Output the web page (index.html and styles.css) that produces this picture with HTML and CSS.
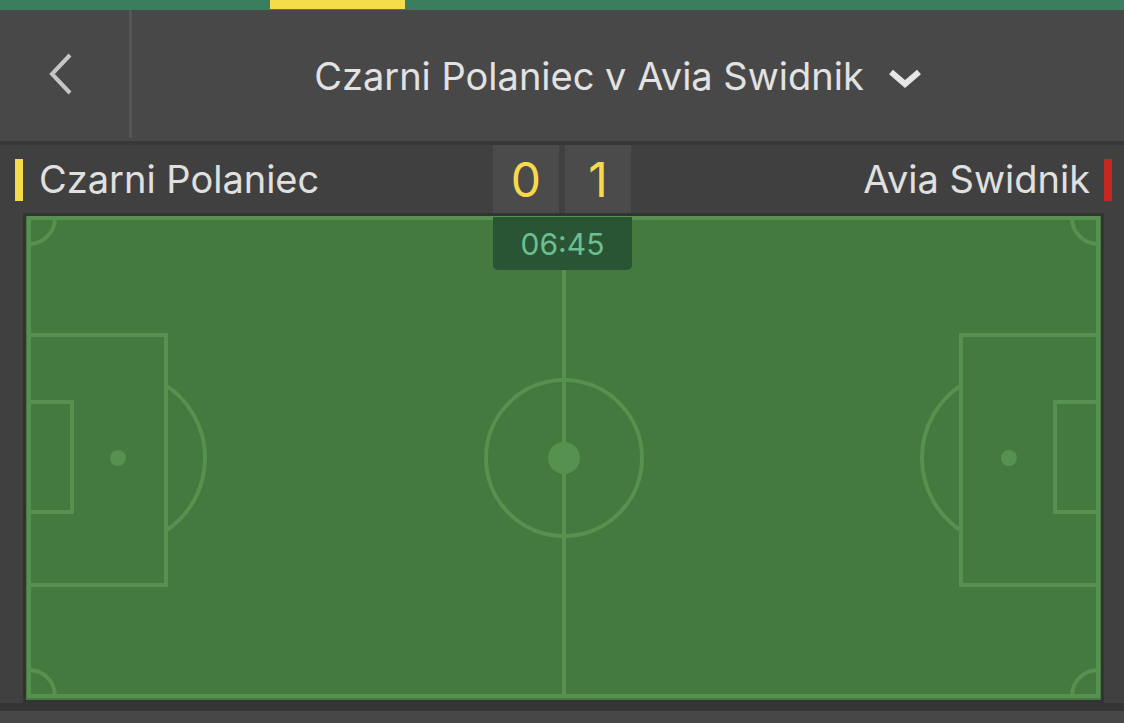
FILE: index.html
```html
<!DOCTYPE html>
<html lang="en">
<head>
    <meta charset="UTF-8">
    <meta name="viewport" content="width=device-width, initial-scale=1.0">
    <title>Czarni Polaniec v Avia Swidnik</title>
    <link rel="stylesheet" href="styles.css">
</head>
<body>
    <div class="topBar">
        <div class="tabMarker"></div>
    </div>

    <header class="header">
        <div class="back">
            <svg width="26" height="42" viewBox="0 0 26 42">
                <path d="M22 2 L4 21 L22 40" fill="none" stroke="#c6c6c6" stroke-width="4"/>
            </svg>
        </div>
        <div class="title">
            <span>Czarni Polaniec v Avia Swidnik</span>
            <svg class="drop" width="34" height="22" viewBox="0 0 34 22">
                <path d="M3 5 L17 17 L31 5" fill="none" stroke="#e6e6e6" stroke-width="6"/>
            </svg>
        </div>
    </header>

    <div class="strip"></div>

    <div class="teams">
        <div class="team home">
            <span class="mark yellow"></span>
            <span>Czarni Polaniec</span>
        </div>
        <div class="score">
            <div class="goal">0</div>
            <div class="goal">1</div>
        </div>
        <div class="team away">
            <span>Avia Swidnik</span>
            <span class="mark red"></span>
        </div>
    </div>

    <div class="pitch">
        <div class="clock">06:45</div>
        <svg width="1075" height="484" viewBox="0 0 1075 484">
            <rect width="1075" height="484" fill="#447a3f"/>
            <g fill="none" stroke="#56914f" stroke-width="4">
                <rect x="3" y="2" width="1069" height="478"/>
                <line x1="538" y1="2" x2="538" y2="480"/>
                <circle cx="538" cy="242" r="78"/>

                <rect x="3" y="119" width="137" height="250"/>
                <rect x="3" y="186" width="43" height="110"/>
                <path d="M140 169.4 A87 87 0 0 1 140 314.6"/>

                <rect x="935" y="119" width="137" height="250"/>
                <rect x="1029" y="186" width="43" height="110"/>
                <path d="M935 169.4 A87 87 0 0 0 935 314.6"/>

                <path d="M3 28 A26 26 0 0 0 29 2"/>
                <path d="M1046 2 A26 26 0 0 0 1072 28"/>
                <path d="M29 480 A26 26 0 0 0 3 454"/>
                <path d="M1072 454 A26 26 0 0 0 1046 480"/>
            </g>
            <g fill="#56914f">
                <circle cx="538" cy="242" r="16"/>
                <circle cx="92" cy="242" r="8"/>
                <circle cx="983" cy="242" r="8"/>
            </g>
        </svg>
    </div>

    <div class="bottomStrip"></div>
</body>
</html>
```

FILE: styles.css
```css
body {
    margin: 0;
    background-color: #404040;
    font-family: Inter, "Open Sans", sans-serif;
    overflow: hidden;
}

.topBar {
    height: 10px;
    background-color: #3b7d5f;
}

.tabMarker {
    margin-left: 270px;
    width: 135px;
    height: 9px;
    background-color: #f5dc4a;
}

.header {
    display: flex;
    height: 131px;
    background-color: #484848;
}

.back {
    width: 129px;
    border-right: 3px solid #555555;
    margin-bottom: 3px;
    display: flex;
    justify-content: center;
    align-items: center;
}

.back svg {
    margin-right: 8px;
}

.title {
    flex: 1;
    display: flex;
    justify-content: center;
    align-items: center;
    gap: 24px;
    padding-right: 20px;
    color: #e2e2e2;
    font-size: 38px;
}

.drop {
    margin-top: 4px;
}

.strip {
    height: 4px;
    background-color: #383838;
}

.teams {
    display: grid;
    grid-template-columns: 1fr auto 1fr;
    height: 68px;
    align-items: center;
    color: #e0e0e0;
    font-size: 38px;
}

.team {
    display: flex;
    align-items: center;
    gap: 16px;
}

.home {
    padding-left: 15px;
}

.away {
    justify-content: flex-end;
    padding-right: 12px;
    gap: 14px;
}

.mark {
    width: 8px;
    height: 42px;
    margin-top: 2px;
}

.yellow {
    background-color: #f5dc4a;
}

.red {
    background-color: #c4281f;
}

.score {
    display: flex;
    gap: 6px;
    height: 100%;
}

.goal {
    width: 66px;
    display: flex;
    justify-content: center;
    align-items: center;
    background-color: #4b4b4b;
    color: #f7d94c;
    font-size: 48px;
}

.pitch {
    position: relative;
    width: 1075px;
    height: 484px;
    margin-left: 23px;
    border: 3px solid #333333;
}

.pitch svg {
    display: block;
}

.clock {
    position: absolute;
    top: 1px;
    left: 467px;
    width: 139px;
    height: 53px;
    border-radius: 0 0 5px 5px;
    background-color: #2a5535;
    color: #6cbf92;
    font-size: 30px;
    display: flex;
    justify-content: center;
    align-items: center;
}

.bottomStrip {
    height: 8px;
    background-color: #353535;
    border-bottom: 20px solid #474747;
}
```
